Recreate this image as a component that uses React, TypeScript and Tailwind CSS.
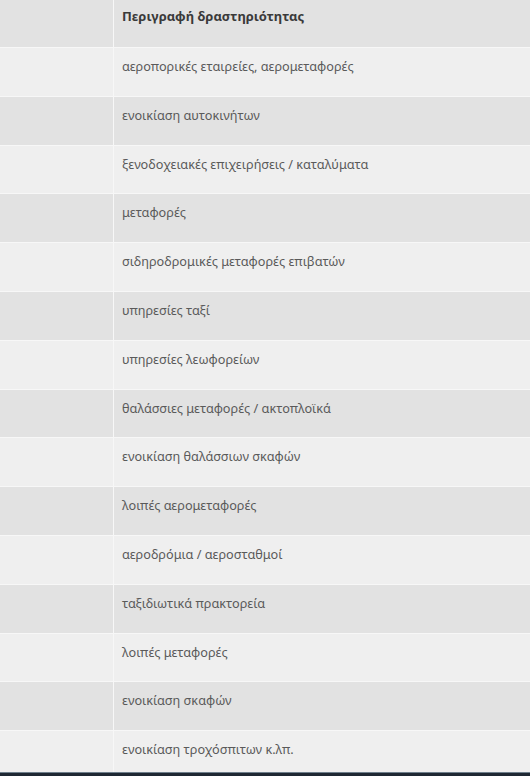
import React from 'react';

const ROWS = [
  'αεροπορικές εταιρείες, αερομεταφορές',
  'ενοικίαση αυτοκινήτων',
  'ξενοδοχειακές επιχειρήσεις / καταλύματα',
  'μεταφορές',
  'σιδηροδρομικές μεταφορές επιβατών',
  'υπηρεσίες ταξί',
  'υπηρεσίες λεωφορείων',
  'θαλάσσιες μεταφορές / ακτοπλοϊκά',
  'ενοικίαση θαλάσσιων σκαφών',
  'λοιπές αερομεταφορές',
  'αεροδρόμια / αεροσταθμοί',
  'ταξιδιωτικά πρακτορεία',
  'λοιπές μεταφορές',
  'ενοικίαση σκαφών',
  'ενοικίαση τροχόσπιτων κ.λπ.',
];

export default function App() {
  return (
    <div
      className="w-[530px] h-[776px] flex flex-col overflow-hidden bg-[#efefef]"
      style={{ fontFamily: '"Noto Sans", "Open Sans", sans-serif' }}
    >
      <div className="flex-1 overflow-hidden">
        {/* header */}
        <div className="flex h-[48px] bg-[#e2e2e2] border-b border-[#f7f7f7]">
          <div className="w-[114px] shrink-0 border-r border-[#f7f7f7]" />
          <div className="flex-1 pl-2 pt-[7px] text-[13px] leading-[18px] font-bold text-[#3a3a3a]">
            Περιγραφή δραστηριότητας
          </div>
        </div>

        {ROWS.map((label, i) => (
          <div
            key={i}
            className={`flex h-[48.8px] border-b border-[#f7f7f7] ${i % 2 === 0 ? 'bg-[#efefef]' : 'bg-[#e2e2e2]'}`}
          >
            <div className="w-[114px] shrink-0 border-r border-[#f7f7f7]" />
            <div className="flex-1 pl-2 pt-[9px] text-[12.7px] leading-[18px] text-[#5a5a5a]">
              {label}
            </div>
          </div>
        ))}
      </div>

      {/* dark strip at the bottom */}
      <div className="h-[4px] shrink-0 bg-[#1e2833] border-t border-[#6f7f8c]" />
    </div>
  );
}
